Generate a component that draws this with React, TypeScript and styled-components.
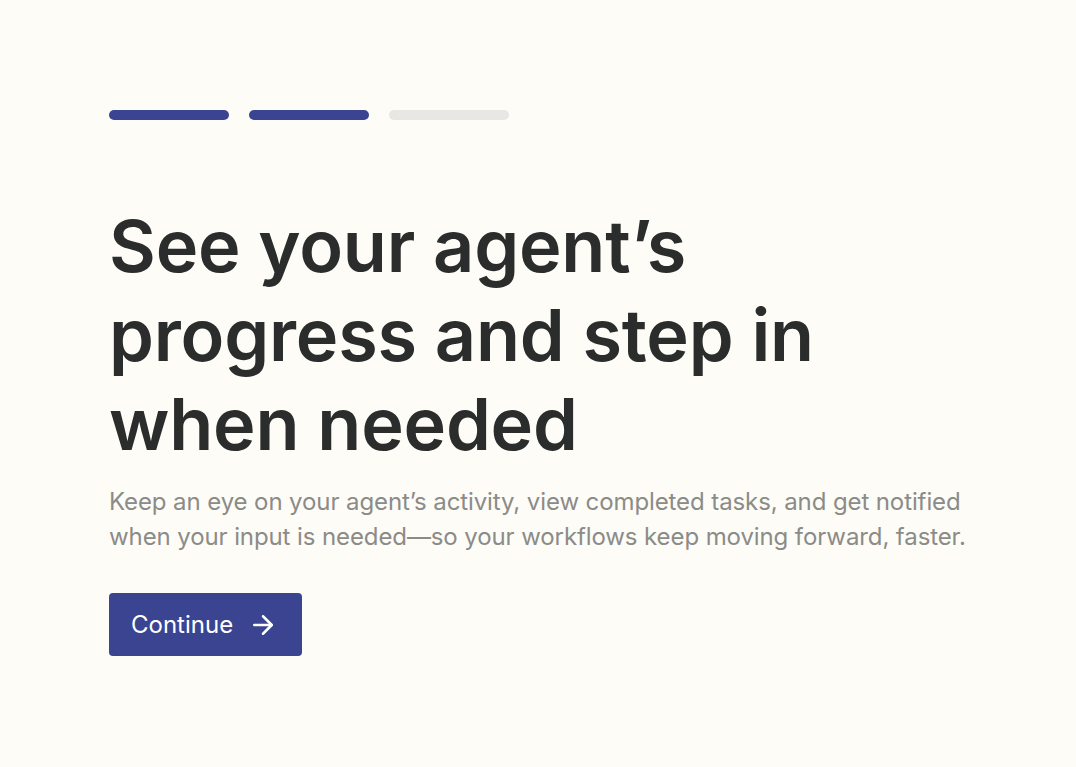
import React from 'react';
import styled, { createGlobalStyle } from 'styled-components';
import { ArrowRight } from 'lucide-react';

const GlobalStyle = createGlobalStyle`
  html, body {
    margin: 0;
    padding: 0;
    background: #fdfcf7;
  }
  body {
    font-family: Inter, "Noto Sans", sans-serif;
    -webkit-font-smoothing: antialiased;
  }
`;

const Page = styled.main`
  min-height: 767px;
  box-sizing: border-box;
  padding: 110px 60px 0 109px;
  display: flex;
  flex-direction: column;
`;

const Steps = styled.div`
  display: flex;
  gap: 20px;
  margin-bottom: 81px;
`;

const Step = styled.span<{ $done: boolean }>`
  width: 120px;
  height: 10px;
  border-radius: 5px;
  background: ${({ $done }) => ($done ? '#3b4491' : '#e8e7e3')};
`;

const Title = styled.h1`
  margin: 0;
  font-size: 72px;
  line-height: 89px;
  font-weight: 600;
  letter-spacing: -0.2px;
  color: #2b2d2c;
  max-width: 760px;
`;

const Lead = styled.p`
  margin: 16px 0 0;
  font-size: 24px;
  letter-spacing: -0.1px;
  line-height: 35px;
  color: #8b8b88;
  max-width: 880px;
`;

const PrimaryButton = styled.button`
  margin-top: 39px;
  align-self: flex-start;
  display: inline-flex;
  align-items: center;
  gap: 15px;
  height: 63px;
  padding: 0 24px 0 22px;
  border: none;
  border-radius: 4px;
  background: #3b4491;
  color: #fff;
  font-family: inherit;
  font-size: 24px;
  font-weight: 400;
  cursor: pointer;
`;

const steps = [true, true, false];

export default function App() {
  return (
    <>
      <GlobalStyle />
      <Page>
        <Steps>
          {steps.map((done, i) => (
            <Step key={i} $done={done} />
          ))}
        </Steps>
        <Title>See your agent’s progress and step in when needed</Title>
        <Lead>
          Keep an eye on your agent’s activity, view completed tasks, and get notified when your
          input is needed—so your workflows keep moving forward, faster.
        </Lead>
        <PrimaryButton>
          Continue
          <ArrowRight size={30} strokeWidth={2} />
        </PrimaryButton>
      </Page>
    </>
  );
}
